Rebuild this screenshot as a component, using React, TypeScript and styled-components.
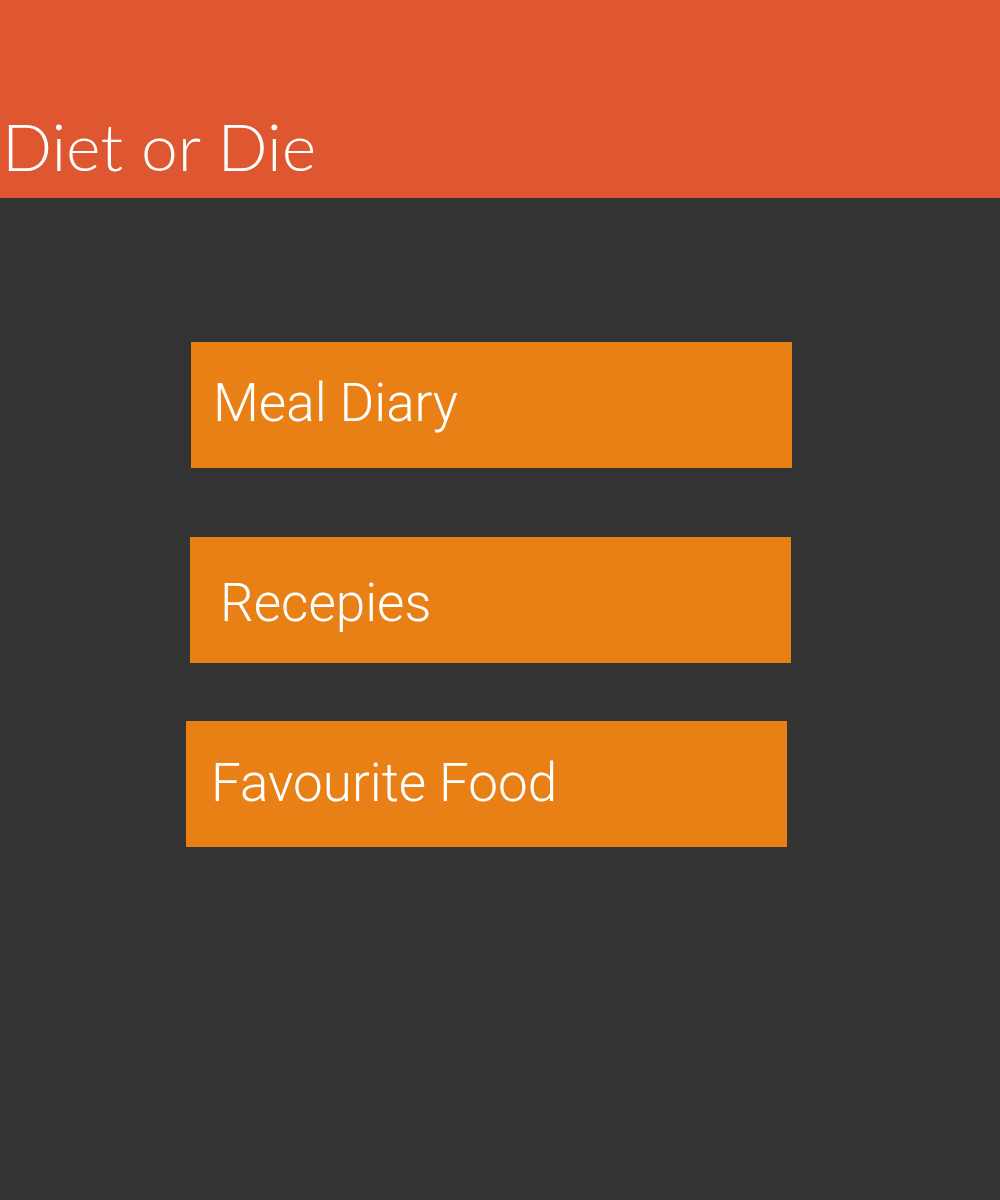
import React from "react";
import styled, { createGlobalStyle } from "styled-components";

const GlobalStyle = createGlobalStyle`
  html, body {
    margin: 0;
    padding: 0;
    background-color: #333333;
  }
  #root {
    min-height: 1200px;
  }
`;

const Page = styled.div`
  min-height: 1200px;
  background-color: #333333;
  display: flex;
  flex-direction: column;
`;

const Header = styled.header`
  height: 198px;
  background-color: #de5730;
  display: flex;
  align-items: flex-end;
  box-sizing: border-box;
  padding: 0 0 19px 2px;
`;

const Title = styled.h1`
  margin: 0;
  font-family: Lato, "Open Sans", sans-serif;
  font-weight: 300;
  font-size: 66px;
  line-height: 1;
  color: #ffffff;
`;

const Menu = styled.nav`
  display: flex;
  flex-direction: column;
  padding-top: 144px;
`;

interface ItemProps {
  $shift: number;
  $gap: number;
  $indent: number;
  $drop: number;
}

const MenuItem = styled.a<ItemProps>`
  display: flex;
  align-items: center;
  box-sizing: border-box;
  width: 601px;
  height: 126px;
  margin-left: ${(props) => props.$shift}px;
  margin-top: ${(props) => props.$gap}px;
  padding-left: ${(props) => props.$indent}px;
  padding-top: ${(props) => props.$drop}px;
  padding-bottom: 4px;
  background-color: #e98016;
  color: #ffffff;
  font-family: Roboto, "Noto Sans", sans-serif;
  font-weight: 300;
  font-size: 53px;
  text-decoration: none;
  cursor: pointer;
`;

const items = [
  { label: "Meal Diary", shift: 191, gap: 0, indent: 22, drop: 0 },
  { label: "Recepies", shift: 190, gap: 69, indent: 30, drop: 10 },
  { label: "Favourite Food", shift: 186, gap: 58, indent: 25, drop: 2 },
];

const App: React.FC = () => {
  return (
    <Page>
      <GlobalStyle />
      <Header>
        <Title>Diet or Die</Title>
      </Header>
      <Menu>
        {items.map((item) => (
          <MenuItem
            key={item.label}
            $shift={item.shift}
            $gap={item.gap}
            $indent={item.indent}
            $drop={item.drop}
          >
            {item.label}
          </MenuItem>
        ))}
      </Menu>
    </Page>
  );
};

export default App;
